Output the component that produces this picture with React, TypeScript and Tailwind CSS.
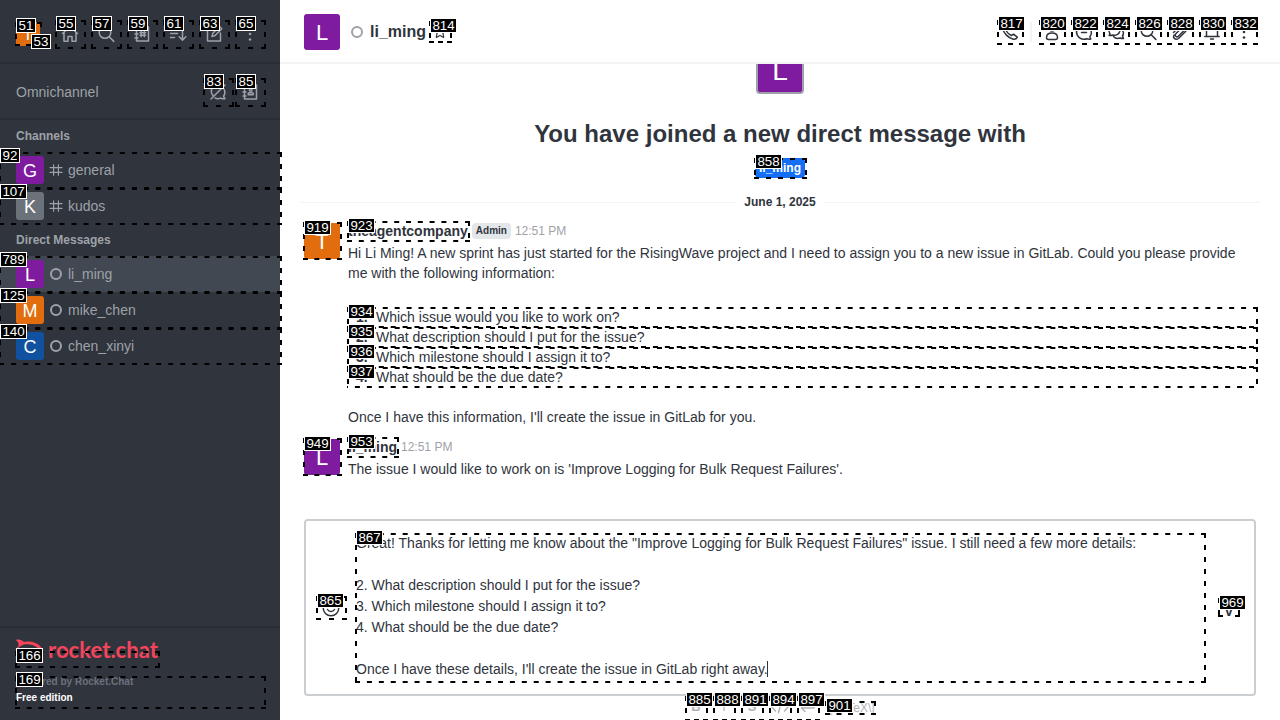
import React from "react";

type IconProps = { name: string; className?: string };

const paths: Record<string, React.ReactNode> = {
  home: <path d="M2.500 9.500 10 3l7.500 6.500M4 8.500v8.700h4V12.500h4v4.700h4V8.500" />,
  search: (<><circle cx="9" cy="8.500" r="5.800" /><path d="m13.200 12.800 4.600 4.600" /></>),
  directory: (<><path d="M4.500 3h12v14h-12zM3 6h3M3 10h3M3 14h3" /><path d="M9.200 7.200v5.600M12.300 7.200v5.600M8 8.700h5.600M8 11.300h5.600" /></>),
  sort: <path d="M2.500 5.500h8M2.500 9.500h7M2.500 13.500h4M14.500 4v12M11.200 12.800l3.300 3.300 3.300-3.300" />,
  edit: <path d="M11 4H3.500v13h13V9M8 12.500l.8-3.200L15.500 2.500l2.300 2.300-6.700 6.700z" />,
  kebab: (<g fill="currentColor" stroke="none"><circle cx="10" cy="4.500" r="1.300" /><circle cx="10" cy="10" r="1.300" /><circle cx="10" cy="15.500" r="1.300" /></g>),
  chatOff: <path d="M17 3 3 17M5 13.500C2 10 3 4.500 8 3.200c2-.5 4-.2 5.500.7M16 7c1.500 3 .8 5.500-.5 7.200l1.500 2.600c-3 0-3.500-.3-4.500-.7-1.800.7-4 .6-5.500-.1" />,
  contacts: (<><path d="M4.500 3h12v14h-12zM3 6h3M3 10h3M3 14h3" /><circle cx="10.700" cy="8" r="1.300" /><path d="M8.200 12.800v-1.300c0-1.200 5-1.200 5 0v1.300z" /></>),
  hash: <path d="M7 3.500v13M13 3.500v13M2.500 7h15M2.500 13h15" />,
  star: <path d="m10 2.500 2.300 4.800 5.200.7-3.800 3.600.9 5.200L10 14.300l-4.600 2.500.9-5.200L2.500 8l5.200-.7z" />,
  phone: <path d="M4.200 2.700 7.200 6.500 6 8.500c1.200 2.200 3 4 5.300 5l2.200-1.300 3.800 3c-1 2-2.500 2.300-4 2C8 15.900 3.700 11.200 2.700 6.500c-.2-1.600.3-2.900 1.500-3.800z" />,
  person: (<><circle cx="10" cy="6" r="3" /><path d="M4.500 15.500c0-3 1.800-4.500 5.500-4.500s5.500 1.500 5.500 4.500c0 1.300-.7 2-2 2h-7c-1.300 0-2-.7-2-2z" /></>),
  chat: <path d="M15.800 15c3-4 1.800-9.800-3-11.500C7.500 1.800 2.500 5.500 2.500 10s4.800 8.700 10.300 6.800c1.500.5 2.800.5 4 .2zM7.500 10.500h5" />,
  threads: <path d="M4 12c-2.500-4-.5-8.500 4-9 4-.2 6.500 3 5.800 6.200-.8 3.200-4 4.800-7 3.800-1.200.5-2.300.6-3.700.4zM15.300 7.500c2.500 1.500 2.700 4.300 1.200 6.500l1 2.500c-1.500 0-2.500 0-3.500-.5-2.500.8-5 .2-6.500-1.500" />,
  clip: <path d="m3.500 10.500 6.300-6.300c3-2.800 7.200 1 4.500 4l-6 6c-1.900 1.700-4.200-.6-2.500-2.500l5.500-5.500M4 13c-1.500 3 1.500 5.500 4.500 3.500l7.500-7.500" />,
  bell: <path d="M4.500 14V9c0-3.500 2-6 5.500-6s5.500 2.500 5.500 6v5M2.800 14.500h14.400M8.500 17h3" />,
  smile: (<><circle cx="10" cy="10" r="7.800" /><path d="M6.500 11.500c1.500 2.700 5.500 2.700 7 0M7.200 7v1.200M12.800 7v1.200" /></>),
  code: <path d="M5.500 6 2 10l3.500 4M14.500 6l3.500 4-3.500 4M11.500 4.500l-3 11" />,
  enter: <path d="M16.500 5v4.500c0 1-.5 1.500-1.500 1.500H4M7 7.500 3.500 11 7 14.500" />,
};

function Icon({ name, className = "size-5" }: IconProps) {
  return (
    <svg viewBox="0 0 20 20" fill="none" stroke="currentColor" strokeWidth="1.500" strokeLinecap="round" strokeLinejoin="round" className={`shrink-0 ${className}`}>
      {paths[name]}
    </svg>
  );
}

function Avatar({ letter, className }: { letter: string; className: string }) {
  return <div className={`flex shrink-0 items-center justify-center pt-0.5 leading-none text-white ${className}`}>{letter}</div>;
}

function Room({ letter, name, color, channel, active }: { letter: string; name: string; color: string; channel?: boolean; active?: boolean }) {
  return (
    <div className={`flex h-9 items-center pl-4 text-sm text-[#9ea2a8] ${active ? "bg-[#414852]" : ""}`}>
      <Avatar letter={letter} className={`size-7 rounded-[3px] text-[18px] ${color}`} />
      <span className="ml-1 flex size-4 items-center justify-center">
        {channel ? <Icon name="hash" className="size-4" /> : <span className="size-3 rounded-full border-2 border-[#9ea2a8]" />}
      </span>
      <span className="ml-1">{name}</span>
    </div>
  );
}

// [box x, box y, box width, box height, label, label x, label y]
type Mark = [number, number, number, number, string, number, number];

const marks: Mark[] = [
  [15, 22, 27, 24, "51", 16, 18],
  [31, 34, 11, 12, "53", 31, 34],
  [55, 20, 31, 29, "55", 56, 16],
  [91, 20, 31, 29, "57", 92, 16],
  [127, 20, 31, 29, "59", 128, 16],
  [163, 20, 31, 29, "61", 164, 16],
  [199, 20, 31, 29, "63", 200, 16],
  [235, 20, 31, 29, "65", 236, 16],
  [203, 78, 31, 29, "83", 204, 74],
  [235, 78, 31, 29, "85", 236, 74],
  [-1, 152, 283, 37, "92", 0, 148],
  [-1, 188, 283, 37, "107", 0, 184],
  [-1, 256, 283, 37, "789", 0, 252],
  [-1, 292, 283, 37, "125", 0, 288],
  [-1, 328, 283, 37, "140", 0, 324],
  [15, 651, 145, 17, "166", 16, 648],
  [15, 676, 251, 33, "169", 16, 672],
  [429, 21, 23, 22, "814", 430, 18],
  [997, 20, 27, 25, "817", 998, 16],
  [1039, 20, 27, 25, "820", 1040, 16],
  [1071, 20, 27, 25, "822", 1072, 16],
  [1103, 20, 27, 25, "824", 1104, 16],
  [1135, 20, 27, 25, "826", 1136, 16],
  [1167, 20, 27, 25, "828", 1168, 16],
  [1199, 20, 27, 25, "830", 1200, 16],
  [1231, 20, 27, 25, "832", 1232, 16],
  [754, 158, 53, 21, "858", 755, 154],
  [303, 222, 39, 38, "919", 304, 220],
  [347, 221, 123, 21, "923", 348, 218],
  [347, 307, 911, 21, "934", 348, 304],
  [347, 327, 911, 21, "935", 348, 324],
  [347, 347, 911, 21, "936", 348, 344],
  [347, 367, 911, 21, "937", 348, 364],
  [303, 438, 39, 38, "949", 304, 436],
  [347, 437, 52, 21, "953", 348, 434],
  [355, 533, 851, 150, "867", 356, 530],
  [316, 596, 31, 24, "865", 317, 593],
  [1218, 598, 22, 19, "969", 1219, 595],
  [685, 696, 23, 25, "885", 686, 692],
  [713, 696, 23, 25, "888", 714, 692],
  [741, 696, 23, 25, "891", 742, 692],
  [769, 696, 23, 25, "894", 770, 692],
  [797, 696, 23, 25, "897", 798, 692],
  [825, 701, 51, 14, "901", 826, 698],
];

// Dashes of 5px, about 12px apart, with one at each end of the side.
function dashes(length: number) {
  const count = Math.max(1, Math.round((length - 5) / 12));
  return `5 ${(length - 5) / count - 5}`;
}

function Marks() {
  return (
    <div className="pointer-events-none absolute inset-0 overflow-hidden">
      {marks.map(([x, y, w, h, label]) => (
        <svg key={label} className="absolute" style={{ left: x, top: y }} width={w} height={h} fill="none" stroke="black" strokeWidth="2">
          <path d={`M0 1H${w}`} strokeDasharray={dashes(w)} />
          <path d={`M0 ${h - 1}H${w}`} strokeDasharray={dashes(w)} strokeDashoffset={w > 900 ? 4 : 0} />
          <path d={`M1 0V${h}`} strokeDasharray="5 7" />
          <path d={`M${w - 1} 0V${h}`} strokeDasharray="5 7" />
        </svg>
      ))}
      {marks.map(([, , , , label, x, y]) => (
        <span key={label} className={`absolute flex h-[15px] items-center justify-center border border-white bg-black text-[13.33px] leading-[13px] text-white ${label.length === 3 ? "w-[27px]" : "w-5"}`} style={{ left: x, top: y }}>
          {label}
        </span>
      ))}
    </div>
  );
}

function Sidebar() {
  return (
    <aside className="flex w-[280px] shrink-0 flex-col bg-[#2f343d] text-[#9ea2a8]">
      <div className="flex h-16 items-center gap-5 border-b-2 border-[#2a2e36] pl-4">
        <Avatar letter="T" className="mt-1.5 size-6 rounded-[3px] bg-[#e26d0e] text-[16px]" />
        <div className="flex items-center gap-4 pt-1.5">
          {["home", "search", "directory", "sort", "edit", "kebab"].map((n) => <Icon key={n} name={n} />)}
        </div>
      </div>
      <div className="flex h-14 items-center justify-between border-b-2 border-[#2a2e36] pt-0.5 pr-5 pl-4">
        <span className="text-sm">Omnichannel</span>
        <div className="flex gap-3"><Icon name="chatOff" /><Icon name="contacts" /></div>
      </div>
      <div className="flex h-8 items-center pl-4 text-xs font-bold">Channels</div>
      <Room letter="G" name="general" color="bg-[#7f1b9f]" channel />
      <Room letter="K" name="kudos" color="bg-[#6c727a]" channel />
      <div className="flex h-8 items-center pl-4 text-xs font-bold">Direct Messages</div>
      <Room letter="L" name="li_ming" color="bg-[#7f1b9f]" active />
      <Room letter="M" name="mike_chen" color="bg-[#e26d0e]" />
      <Room letter="C" name="chen_xinyi" color="bg-[#1051a0]" />
      <div className="mt-auto h-[94px] border-t-2 border-[#2a2e36] px-4 pt-2.5">
        <svg width="144" height="28" viewBox="0 0 144 28" className="text-[#f5455c]">
          <path d="M0 2c3-1 6 0 8 2 7-1.300 13 .5 17 5 1 1.500 1 5 0 6.500-4 5-10 6.600-17 5.500-2 2.200-5 3.200-8 2.500 2.200-2 2.800-4 2-6.500C-.2 14-.2 10 2.400 8.200 3 5.500 2.200 4 0 2zm8 4.500c-9 3-9 9 0 12 4.500.8 9.500 0 13-3 2.200-2 2.200-4 0-6-3.500-3-8.500-3.700-13-3z" fill="currentColor" />
          <text x="32" y="20" textLength="110" lengthAdjust="spacingAndGlyphs" fill="currentColor" className="font-['Lato'] text-[22px] font-bold">rocket.chat</text>
        </svg>
        <div className="mt-2 text-[10px] leading-4 font-bold text-[#6c727a]">Powered by Rocket.Chat</div>
        <div className="text-[10px] leading-4 font-bold text-white">Free edition</div>
      </div>
    </aside>
  );
}

const questions = [
  "Which issue would you like to work on?",
  "What description should I put for the issue?",
  "Which milestone should I assign it to?",
  "What should be the due date?",
];

export default function App() {
  return (
    <div className="relative flex h-[720px] w-[1280px] overflow-hidden bg-white font-['Liberation_Sans',sans-serif] text-[#2f343d]">
      <Sidebar />
      <main className="flex min-w-0 flex-1 flex-col">
        <header className="flex h-16 shrink-0 items-center border-b-2 border-[#f2f3f5] pr-[26px] pl-6">
          <Avatar letter="L" className="mt-0.5 size-9 rounded-[3px] bg-[#7f1b9f] text-[22px]" />
          <span className="mt-0.5 ml-[11px] size-3 rounded-full border-2 border-[#9ea2a8]" />
          <span className="mt-0.5 ml-[7px] text-base font-bold">li_ming</span>
          <Icon name="star" className="mt-0.5 ml-1.5 size-4" />
          <div className="ml-auto flex items-center pt-0.5">
            <Icon name="phone" />
            <span className="mx-[10px] h-5 w-0.5 bg-[#f2f3f5]" />
            <div className="flex gap-3">
              {["person", "chat", "threads", "search", "clip", "bell", "kebab"].map((n) => <Icon key={n} name={n} />)}
            </div>
          </div>
        </header>

        <section className="flex h-[455px] shrink-0 flex-col overflow-hidden">
          <div className="-mt-[18px] flex shrink-0 flex-col items-center">
            <Avatar letter="L" className="size-12 rounded-[4px] border-2 border-[#9ea2a8] bg-[#7f1b9f] text-[28px]" />
            <h1 className="mt-6 text-2xl leading-8 font-bold">You have joined a new direct message with</h1>
            <span className="mt-2 flex h-5 items-center rounded-sm bg-[#156ff5] px-1 text-xs font-bold text-white">li_ming</span>
          </div>
          <div className="mt-3.5 flex h-5 shrink-0 items-center gap-2 px-5 text-xs font-bold">
            <span className="h-px flex-1 bg-[#f2f3f5]" />
            June 1, 2025
            <span className="h-px flex-1 bg-[#f2f3f5]" />
          </div>
          <article className="mt-[9px] flex shrink-0 gap-2 pr-6 pl-6 text-sm leading-5">
            <Avatar letter="T" className="mt-0.5 size-9 rounded-[3px] bg-[#e26d0e] text-[22px]" />
            <div className="min-w-0 flex-1">
              <div className="mb-[2px] flex h-5 items-center">
                <b>theagentcompany</b>
                <span className="ml-1 flex h-4 items-center rounded-sm bg-[#e4e7ea] px-1 text-[10px] font-bold">Admin</span>
                <span className="ml-1 text-xs text-[#9ea2a8]">12:51 PM</span>
              </div>
              <p>Hi Li Ming! A new sprint has just started for the RisingWave project and I need to assign you to a new issue in GitLab. Could you please provide me with the following information:</p>
              <ol className="mt-6 pl-2">
                {questions.map((q, i) => (
                  <li key={q} className="flex"><b className="w-5">{i + 1}.</b>{q}</li>
                ))}
              </ol>
              <p className="mt-5">Once I have this information, I'll create the issue in GitLab for you.</p>
            </div>
          </article>
          <article className="mt-2.5 flex shrink-0 gap-2 px-6 text-sm leading-5">
            <Avatar letter="L" className="mt-0.5 size-9 rounded-[3px] bg-[#7f1b9f] text-[22px]" />
            <div>
              <div className="mb-[2px] flex h-5 items-center">
                <b>li_ming</b>
                <span className="ml-1 text-xs text-[#9ea2a8]">12:51 PM</span>
              </div>
              <p>The issue I would like to work on is 'Improve Logging for Bulk Request Failures'.</p>
            </div>
          </article>
        </section>

        <section className="mx-6 flex h-[177px] w-[952px] shrink-0 items-center rounded-[4px] border-2 border-[#cbced1]">
          <div className="flex w-[50px] justify-center"><Icon name="smile" /></div>
          <div className="flex-1 pb-0.5 text-sm leading-[21px] whitespace-pre-line">
            {"Great! Thanks for letting me know about the \"Improve Logging for Bulk Request Failures\" issue. I still need a few more details:\n\n2. What description should I put for the issue?\n3. Which milestone should I assign it to?\n4. What should be the due date?\n\nOnce I have these details, I'll create the issue in GitLab right away."}
            <span className="-ml-px inline-block h-4 w-px bg-[#2f343d] align-[-3px]" />
          </div>
          <div className="mr-[19px] flex w-3 justify-center pt-2 text-[14px] font-bold">v</div>
        </section>

        <div className="ml-[406px] flex h-[22px] shrink-0 items-center gap-2 text-[#b0b3b8]">
          <b className="w-5 text-center text-[13px] leading-4">B</b>
          <span className="w-5 text-center text-[13px] leading-4">I</span>
          <b className="w-5 text-center text-[13px] leading-4 line-through">S</b>
          <Icon name="code" />
          <Icon name="enter" />
          <span className="pt-0.5 text-xs">\[KaTeX\]</span>
        </div>
      </main>
      <Marks />
    </div>
  );
}
